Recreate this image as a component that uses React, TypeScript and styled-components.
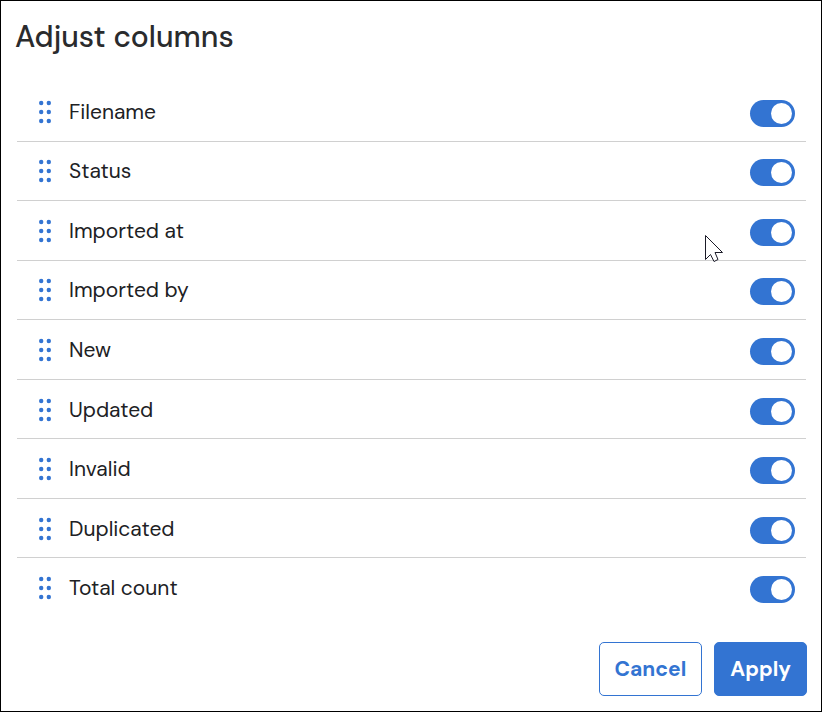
import { useState } from "react";
import styled, { createGlobalStyle } from "styled-components";

const blue = "#3374d2";

const GlobalStyle = createGlobalStyle`
  * { box-sizing: border-box; }
  body {
    margin: 0;
    background: #fff;
    color: #202124;
    font-family: "DM Sans", Inter, sans-serif;
  }
`;

const Dialog = styled.main`
  position: relative;
  display: flex;
  flex-direction: column;
  min-height: 100vh;
  padding: 15px 14px 15px 14px;
  border: 1px solid #000;
`;

const Title = styled.h1`
  margin: 0 0 24px;
  font-size: 30px;
  font-weight: 500;
  line-height: 42px;
  color: #2a2b2d;
`;

const ColumnList = styled.ul`
  flex: 1;
  display: grid;
  grid-auto-rows: 1fr;
  margin: 0 1px 24px 2px;
  padding: 0;
  list-style: none;
`;

const ColumnRow = styled.li`
  display: flex;
  align-items: center;
  min-height: 48px;
  padding: 1px 11px 0 20px;
  border-bottom: 1px solid #d0d0d0;

  &:last-child {
    border-bottom-color: transparent;
  }
`;

const Handle = styled.button`
  display: flex;
  margin-right: 16px;
  padding: 0;
  border: 0;
  background: none;
  color: ${blue};
  cursor: grab;
`;

const ColumnName = styled.label`
  flex: 1;
  font-size: 21px;
  line-height: 28px;
`;

const Toggle = styled.input`
  appearance: none;
  display: flex;
  align-items: center;
  width: 45px;
  height: 27px;
  margin: 3px 0 0;
  padding: 3px;
  border-radius: 14px;
  background: #9aa0a6;
  cursor: pointer;

  &::before {
    content: "";
    width: 21px;
    height: 21px;
    border-radius: 50%;
    background: #fff;
  }

  &:checked {
    justify-content: flex-end;
    background: ${blue};
  }
`;

const Footer = styled.footer`
  display: flex;
  justify-content: flex-end;
  gap: 12px;
`;

const Button = styled.button<{ $primary?: boolean }>`
  height: 54px;
  padding: 0 15px;
  border: 1px solid ${blue};
  border-radius: 5px;
  background: ${(p) => (p.$primary ? blue : "#fff")};
  color: ${(p) => (p.$primary ? "#fff" : blue)};
  font-family: inherit;
  font-size: 21px;
  font-weight: 700;
  line-height: 28px;
  cursor: pointer;
`;

const Pointer = styled.svg`
  position: absolute;
  top: 233px;
  right: 97px;
  pointer-events: none;
`;

const DragDots = () => (
  <svg width="16" height="24" viewBox="0 0 16 24" fill="currentColor" aria-hidden="true">
    {[3, 12, 21].map((y) => (
      <g key={y}>
        <circle cx="4.2" cy={y} r="2.2" />
        <circle cx="11.8" cy={y} r="2.2" />
      </g>
    ))}
  </svg>
);

const columns = [
  "Filename",
  "Status",
  "Imported at",
  "Imported by",
  "New",
  "Updated",
  "Invalid",
  "Duplicated",
  "Total count",
];

export default function App() {
  const [visible, setVisible] = useState<Record<string, boolean>>(
    Object.fromEntries(columns.map((name) => [name, true])),
  );

  return (
    <>
      <GlobalStyle />
      <Dialog>
        <Title>Adjust columns</Title>
        <ColumnList>
          {columns.map((name, i) => (
            <ColumnRow key={name}>
              <Handle type="button" aria-label={`Move ${name}`}>
                <DragDots />
              </Handle>
              <ColumnName htmlFor={`column-${i}`}>{name}</ColumnName>
              <Toggle
                id={`column-${i}`}
                type="checkbox"
                role="switch"
                checked={visible[name]}
                onChange={(e) => setVisible({ ...visible, [name]: e.target.checked })}
              />
            </ColumnRow>
          ))}
        </ColumnList>
        <Footer>
          <Button type="button">Cancel</Button>
          <Button type="button" $primary>
            Apply
          </Button>
        </Footer>
        <Pointer width="20" height="30" viewBox="0 0 20 30" aria-hidden="true">
          <path
            d="M1.5 1.5V25.5L6.5 20.5L10 27.5L14 25.5L11 18.5H18.5Z"
            fill="#fff"
            stroke="#1b1b28"
            strokeWidth="1"
          />
        </Pointer>
      </Dialog>
    </>
  );
}
